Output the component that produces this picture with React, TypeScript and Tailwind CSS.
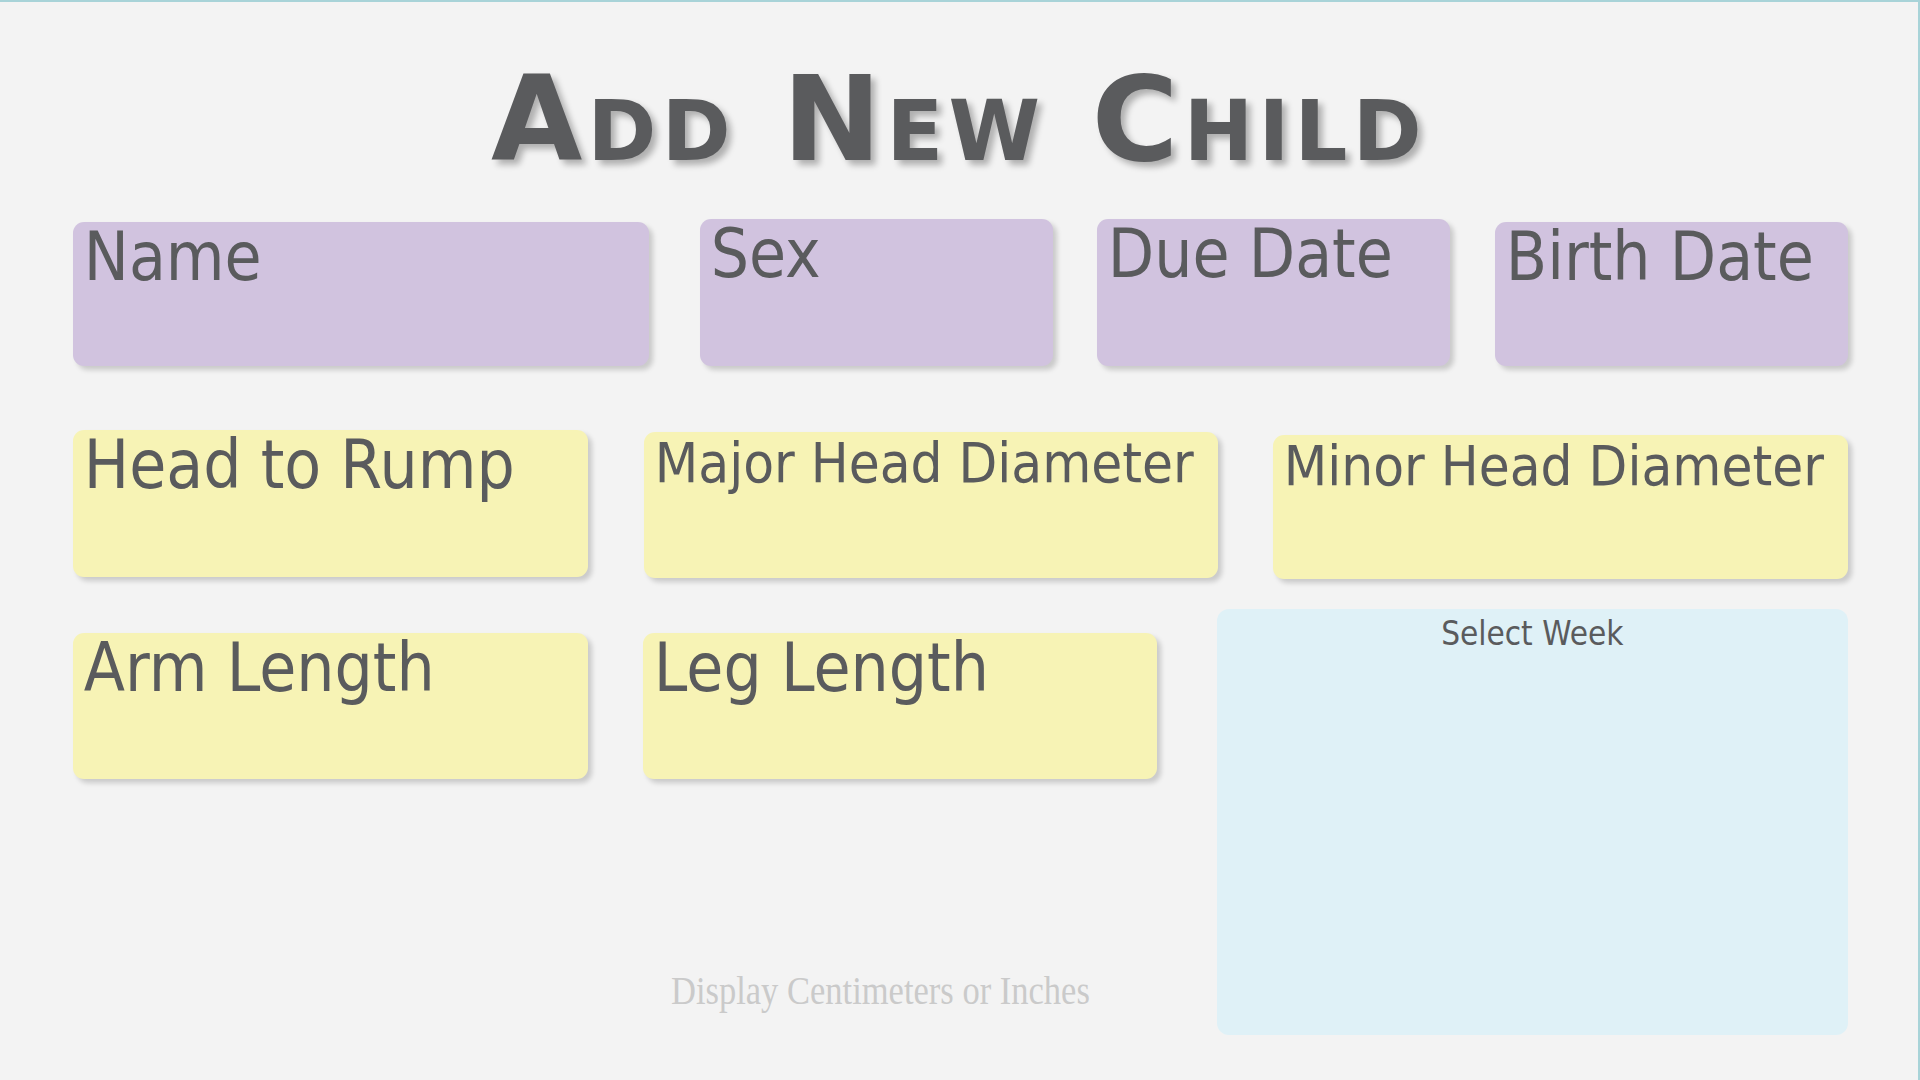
import React from 'react';

type FieldProps = {
  label: string;
  tone: 'purple' | 'yellow';
  className?: string;
  small?: boolean;
};

function Field({ label, tone, className, small }: FieldProps) {
  const bg = tone === 'purple' ? 'bg-[#d1c3df]' : 'bg-[#f7f3b5]';
  return (
    <div
      className={`${bg} ${className ?? ''} shrink-0 rounded-[11px] shadow-[4px_4px_5px_rgba(0,0,0,0.17)]`}
    >
      <span
        className={`inline-block origin-left scale-x-[0.9] whitespace-nowrap leading-none text-[#5a5b5d] ${
          small ? 'pl-[12px] pt-[3px] text-[56px]' : 'pl-[12px] pt-[2px] text-[67px]'
        }`}
      >
        {label}
      </span>
    </div>
  );
}

export default function App() {
  return (
    <div className="h-screen w-full overflow-hidden border-t-2 border-r-2 border-[#a8d3d8] bg-[#f3f3f3] font-['DejaVu_Sans',sans-serif]">
      <h1 className="pt-[58px] text-center text-[118px] font-bold leading-none tracking-[0.045em] text-[#5a5b5d] [font-variant:small-caps] [text-shadow:5px_5px_6px_rgba(0,0,0,0.28)]">
        Add New Child
      </h1>

      <div className="pl-[73px]">
        {/* personal details */}
        <div className="mt-[41px] flex items-start">
          <Field label="Name" tone="purple" className="mt-[3px] h-[144px] w-[576px]" />
          <Field label="Sex" tone="purple" className="ml-[51px] h-[147px] w-[353px]" />
          <Field label="Due Date" tone="purple" className="ml-[44px] h-[147px] w-[353px]" />
          <Field label="Birth Date" tone="purple" className="ml-[45px] mt-[3px] h-[144px] w-[353px]" />
        </div>

        {/* head measurements */}
        <div className="mt-[64px] flex items-start">
          <Field label="Head to Rump" tone="yellow" className="h-[147px] w-[515px]" />
          <Field label="Major Head Diameter" tone="yellow" small className="ml-[56px] mt-[2px] h-[146px] w-[574px]" />
          <Field label="Minor Head Diameter" tone="yellow" small className="ml-[55px] mt-[5px] h-[144px] w-[575px]" />
        </div>

        <div className="mt-[30px] flex items-start">
          <div className="flex w-[1144px] flex-col">
            <div className="mt-[24px] flex">
              <Field label="Arm Length" tone="yellow" className="h-[146px] w-[515px]" />
              <Field label="Leg Length" tone="yellow" className="ml-[55px] h-[146px] w-[514px]" />
            </div>
            <p className="mt-[192px] pl-[598px] font-['Liberation_Serif',serif] text-[39px] leading-none text-[#cacaca]">
              <span className="inline-block origin-left scale-x-[0.885] whitespace-nowrap">
                Display Centimeters or Inches
              </span>
            </p>
          </div>

          <div className="h-[426px] w-[631px] shrink-0 rounded-[12px] bg-[#dff1f7] pt-[8px] text-center">
            <span className="inline-block scale-x-[0.9] whitespace-nowrap text-[33px] leading-none text-[#5a5b5d]">
              Select Week
            </span>
          </div>
        </div>
      </div>
    </div>
  );
}
